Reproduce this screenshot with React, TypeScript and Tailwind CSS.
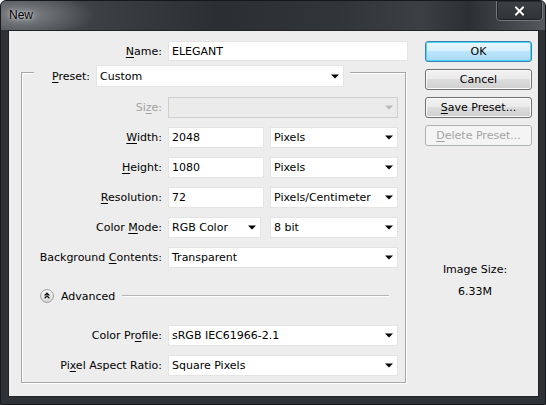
import type { ReactNode } from 'react'

/**
 * Photoshop "New" document dialog (Win7 frame)
 */

function Arrow({ disabled = false }: { disabled?: boolean }) {
  return (
    <svg width="8" height="5" viewBox="0 0 8 5" className="shrink-0">
      <path d="M0 0.5h8L4 4.5z" fill={disabled ? '#b9b9b9' : '#000'} />
    </svg>
  )
}

function TextField({ value, width, height = 21 }: { value: string; width: number; height?: number }) {
  return (
    <div
      className="shrink-0 flex items-center bg-white border border-[#e4e4e4] pl-[3px] text-black whitespace-nowrap"
      style={{ width, height }}
    >
      {value}
    </div>
  )
}

function Select({
  value,
  width,
  height = 21,
  disabled = false,
}: {
  value: string
  width: number
  height?: number
  disabled?: boolean
}) {
  return (
    <div
      className={`shrink-0 flex items-center justify-between pl-[3px] pr-[4px] border whitespace-nowrap ${
        disabled ? 'bg-[#ebebeb] border-[#cfcfcf]' : 'bg-white border-[#e4e4e4] text-black'
      }`}
      style={{ width, height }}
    >
      <span>{value}</span>
      <Arrow disabled={disabled} />
    </div>
  )
}

function Row({
  label,
  disabled = false,
  className = '',
  children,
}: {
  label: ReactNode
  disabled?: boolean
  className?: string
  children: ReactNode
}) {
  return (
    <div className={`flex items-center gap-[6px] ${className}`}>
      <div className={`w-[140px] shrink-0 text-right whitespace-nowrap ${disabled ? 'text-[#a2a2a2]' : 'text-black'}`}>
        {label}
      </div>
      {children}
    </div>
  )
}

function Btn({
  children,
  variant = 'normal',
}: {
  children: ReactNode
  variant?: 'normal' | 'default' | 'disabled'
}) {
  const styles = {
    normal:
      'border-[#707070] text-black bg-[linear-gradient(#f2f2f2,#ebebeb_45%,#dddddd_50%,#cfcfcf)] shadow-[inset_0_0_0_1px_#fbfbfb]',
    default:
      'border-[#3c7fb1] text-black bg-[linear-gradient(#eaf6fd,#d9f0fc_45%,#bee6fd_50%,#a7d9f5)] shadow-[inset_0_0_0_1px_#48d8fb]',
    disabled: 'border-[#adb2b5] text-[#a3a3a3] bg-[#f4f4f4]',
  }[variant]
  return (
    <div className={`h-[21px] w-[107px] rounded-[3px] border flex items-center justify-center ${styles}`}>
      {children}
    </div>
  )
}

export default function App() {
  return (
    <div className="w-[546px] h-[405px] overflow-hidden bg-[#2e3236] border border-[#16181b] rounded-t-[6px] font-['DejaVu_Sans',sans-serif] text-[11px] leading-[13px]">
      {/* title bar */}
      <div className="relative h-[29px] bg-[radial-gradient(ellipse_70px_24px_at_24px_14px,rgba(200,203,206,0.45),transparent),linear-gradient(90deg,#4a4e52,#3a3e42_20%,#2b2f33_40%,#30353a_62%,#3c4044_77%,#2c3035_86%,#55595d)]">
        <span className="absolute left-[8px] top-[8px] font-['Liberation_Sans',sans-serif] text-[12px] text-black [text-shadow:0_0_6px_rgba(255,255,255,0.8),0_0_2px_rgba(255,255,255,0.6)]">
          New
        </span>
        <div className="absolute right-[2px] -top-[1px] w-[47px] h-[21px] rounded-b-[4px] border border-[#74787c] shadow-[inset_0_0_0_1px_rgba(0,0,0,0.35)] bg-[linear-gradient(#3d4146,#2f3338)] flex items-center justify-center">
          <svg width="11" height="10" viewBox="0 0 11 10">
            <path d="M2 1.5l7 7M9 1.5l-7 7" stroke="#2a2a2a" strokeWidth="3.6" strokeLinecap="square" />
            <path d="M2 1.5l7 7M9 1.5l-7 7" stroke="#fff" strokeWidth="2" strokeLinecap="square" />
          </svg>
        </div>
      </div>

      {/* client area */}
      <div className="ml-[7px] w-[531px] h-[367px] bg-[#ededed] border border-[#1f2327] flex pt-[10px] pl-[12px]">
        {/* left column */}
        <div className="w-[385px] shrink-0 flex flex-col">
          <div className="flex items-center gap-[6px]">
            <div className="w-[141px] shrink-0 text-right">
              <span className="underline underline-offset-2">N</span>ame:
            </div>
            <TextField value="ELEGANT" width={240} height={20} />
          </div>

          {/* preset group */}
          <div className="mt-[11px] w-[385px] border border-[#a7a7a7] shadow-[inset_1px_1px_0_#fff,1px_1px_0_#fff] pb-[6px]">
            <div className="-mt-[8px] ml-[12px] w-fit flex items-center gap-[6px] bg-[#ededed] pr-[6px]">
              <div className="w-[56px] text-right">
                <span className="underline underline-offset-2">P</span>reset:
              </div>
              <Select value="Custom" width={248} height={22} />
            </div>

            <Row
              className="mt-[10px]"
              disabled
              label={
                <>
                  Si<span className="underline underline-offset-2">z</span>e:
                </>
              }
            >
              <Select value="" width={230} disabled />
            </Row>

            <Row
              className="mt-[9px]"
              label={
                <>
                  <span className="underline underline-offset-2">W</span>idth:
                </>
              }
            >
              <TextField value="2048" width={96} />
              <Select value="Pixels" width={128} />
            </Row>

            <Row
              className="mt-[9px]"
              label={
                <>
                  <span className="underline underline-offset-2">H</span>eight:
                </>
              }
            >
              <TextField value="1080" width={96} />
              <Select value="Pixels" width={128} />
            </Row>

            <Row
              className="mt-[9px]"
              label={
                <>
                  <span className="underline underline-offset-2">R</span>esolution:
                </>
              }
            >
              <TextField value="72" width={96} />
              <Select value="Pixels/Centimeter" width={128} />
            </Row>

            <Row
              className="mt-[9px]"
              label={
                <>
                  Color <span className="underline underline-offset-2">M</span>ode:
                </>
              }
            >
              <Select value="RGB Color" width={93} />
              <div className="ml-[3px]">
                <Select value="8 bit" width={128} />
              </div>
            </Row>

            <Row
              className="mt-[9px]"
              label={
                <>
                  Background <span className="underline underline-offset-2">C</span>ontents:
                </>
              }
            >
              <Select value="Transparent" width={230} />
            </Row>

            {/* advanced */}
            <div className="mt-[21px] flex items-center pl-[18px] pr-[16px] h-[14px]">
              <svg width="14" height="14" viewBox="0 0 14 14" className="shrink-0">
                <defs>
                  <linearGradient id="adv" x1="0" y1="0" x2="0" y2="1">
                    <stop offset="0" stopColor="#ffffff" />
                    <stop offset="1" stopColor="#d6d6d6" />
                  </linearGradient>
                </defs>
                <circle cx="7" cy="7" r="6.4" fill="url(#adv)" stroke="#9a9a9a" />
                <path d="M4.6 6.4 7 4.2l2.4 2.2M4.6 9.2 7 7l2.4 2.2" fill="none" stroke="#1e1e1e" strokeWidth="1.3" />
              </svg>
              <span className="ml-[7px] text-black">Advanced</span>
              <div className="ml-[7px] flex-1 h-[2px] border-t border-[#b4b4b4] border-b border-b-white" />
            </div>

            <Row
              className="mt-[22px]"
              label={
                <>
                  Color Pr<span className="underline underline-offset-2">o</span>file:
                </>
              }
            >
              <Select value="sRGB IEC61966-2.1" width={230} />
            </Row>

            <Row
              className="mt-[9px]"
              label={
                <>
                  Pi<span className="underline underline-offset-2">x</span>el Aspect Ratio:
                </>
              }
            >
              <Select value="Square Pixels" width={230} />
            </Row>
          </div>
        </div>

        {/* right column */}
        <div className="ml-[19px] w-[107px] shrink-0 flex flex-col gap-[7px]">
          <Btn variant="default">OK</Btn>
          <Btn>Cancel</Btn>
          <Btn>
            <span>
              <span className="underline underline-offset-2">S</span>ave Preset...
            </span>
          </Btn>
          <Btn variant="disabled">
            <span>
              <span className="underline underline-offset-2">D</span>elete Preset...
            </span>
          </Btn>
          <div className="mt-[110px] pr-[7px] text-center text-black">Image Size:</div>
          <div className="mt-[2px] pr-[7px] text-center text-black">6.33M</div>
        </div>
      </div>
    </div>
  )
}
